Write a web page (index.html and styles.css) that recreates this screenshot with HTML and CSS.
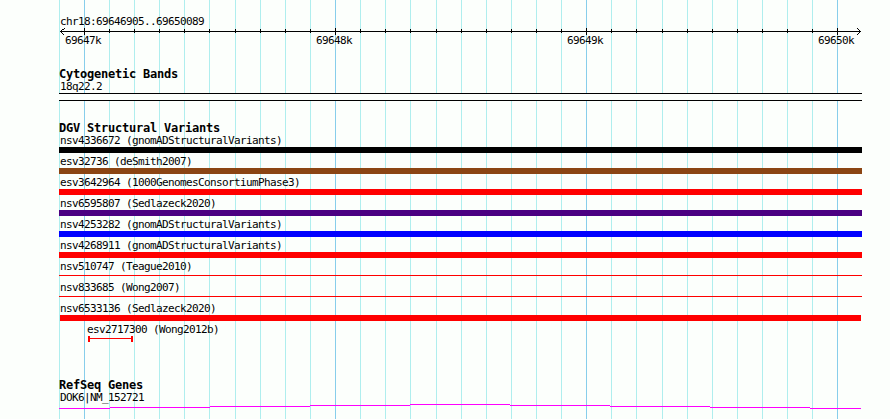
FILE: index.html
```
<!DOCTYPE html>
<html lang="en">
<head>
<meta charset="utf-8">
<title>chr18:69646905..69650089</title>
<link rel="stylesheet" href="styles.css">
</head>
<body>
<svg class="grid" width="890" height="419" aria-hidden="true">
  <path class="minor" d="M59.5 0V419M109.5 0V419M134.5 0V419M159.5 0V419M184.5 0V419M209.5 0V419M235.5 0V419M260.5 0V419M285.5 0V419M310.5 0V419M360.5 0V419M385.5 0V419M410.5 0V419M436.5 0V419M461.5 0V419M486.5 0V419M511.5 0V419M536.5 0V419M561.5 0V419M611.5 0V419M636.5 0V419M662.5 0V419M687.5 0V419M712.5 0V419M737.5 0V419M762.5 0V419M787.5 0V419M812.5 0V419"/>
  <path class="major" d="M84.5 0V419M335.5 0V419M586.5 0V419M837.5 0V419"/>
</svg>
<main class="tracks">
  <section class="ruler">
    <div class="label">chr18:69646905..69650089</div>
    <svg class="axis" width="803" height="20" viewBox="59 28 803 20">
      <path d="M60 31.5H861M64.5 28v1M63.5 29v1M62.5 29v1M61.5 30v1M61.5 32v1M62.5 33v1M63.5 34v1M857.5 28v1M858.5 29v1M859.5 30v1M859.5 32v1M858.5 33v1M857.5 34v1"/>
      <path d="M109.5 29v4M134.5 29v4M159.5 29v4M184.5 29v4M209.5 29v4M235.5 29v4M260.5 29v4M285.5 29v4M310.5 29v4M360.5 29v4M385.5 29v4M410.5 29v4M436.5 29v4M461.5 29v4M486.5 29v4M511.5 29v4M536.5 29v4M561.5 29v4M611.5 29v4M636.5 29v4M662.5 29v4M687.5 29v4M712.5 29v4M737.5 29v4M762.5 29v4M787.5 29v4M812.5 29v4"/>
      <path d="M84.5 28v7M335.5 28v7M586.5 28v7M837.5 28v7"/>
      <text x="65" y="44">69647k</text>
      <text x="316" y="44">69648k</text>
      <text x="567" y="44">69649k</text>
      <text x="818" y="44">69650k</text>
    </svg>
  </section>
  <section class="cyto">
    <h2>Cytogenetic Bands</h2>
    <div class="label">18q22.2</div>
    <div class="band"></div>
  </section>
  <section class="variants">
    <h2>DGV Structural Variants</h2>
    <div class="variant"><div class="label">nsv4336672 (gnomADStructuralVariants)</div><div class="bar black"></div></div>
    <div class="variant"><div class="label">esv32736 (deSmith2007)</div><div class="bar brown"></div></div>
    <div class="variant"><div class="label">esv3642964 (1000GenomesConsortiumPhase3)</div><div class="bar red"></div></div>
    <div class="variant"><div class="label">nsv6595807 (Sedlazeck2020)</div><div class="bar purple"></div></div>
    <div class="variant"><div class="label">nsv4253282 (gnomADStructuralVariants)</div><div class="bar blue"></div></div>
    <div class="variant"><div class="label">nsv4268911 (gnomADStructuralVariants)</div><div class="bar red"></div></div>
    <div class="variant"><div class="label">nsv510747 (Teague2010)</div><div class="bar thin"></div></div>
    <div class="variant"><div class="label">nsv833685 (Wong2007)</div><div class="bar thin"></div></div>
    <div class="variant"><div class="label">nsv6533136 (Sedlazeck2020)</div><div class="bar red inset"></div></div>
    <div class="variant short"><div class="label">esv2717300 (Wong2012b)</div><div class="range"></div></div>
  </section>
  <section class="genes">
    <h2>RefSeq Genes</h2>
    <div class="label">DOK6|NM_152721</div>
    <svg class="gene" width="803" height="15" viewBox="59 404 803 15">
      <path d="M59 408.5H110M110 407.5H210M210 406.5H310M310 405.5H410M410 404.5H510M510 405.5H610M610 406.5H710M710 407.5H810M810 408.5H861"/>
    </svg>
  </section>
</main>
</body>
</html>
```

FILE: styles.css
```
body {
  margin: 0;
  background: #fcfffc;
  color: #000;
  font-family: "DejaVu Sans Mono", "Liberation Mono", monospace;
  overflow: hidden;
}

svg {
  display: block;
  shape-rendering: crispEdges;
}

.grid {
  position: absolute;
  top: 0;
  left: 0;
  fill: none;
}

.minor { stroke: #afeeee; }
.major { stroke: #87ceeb; }

.tracks {
  position: relative;
  width: 803px;
  padding: 15px 0 0 59px;
}

.label,
.axis text {
  font-size: 11px;
  letter-spacing: -0.622px;
}

.label {
  height: 13px;
  padding-left: 1px;
  line-height: 13px;
  white-space: pre;
}

h2 {
  height: 13px;
  margin: 0;
  font-size: 12px;
  font-weight: bold;
  line-height: 14px;
  letter-spacing: -0.224px;
  white-space: pre;
}

.axis path { stroke: #000; fill: none; }
.axis text { fill: #000; }

.cyto { margin-top: 19px; }

.band {
  box-sizing: border-box;
  height: 8px;
  border: solid #000;
  border-width: 1px 0;
  background: #fcfffc;
}

.variants { margin-top: 20px; }
.variant { height: 21px; }

.bar { height: 6px; }
.black { background: #000; }
.brown { background: #8b4513; }
.red { background: #f00; }
.purple { background: #4b0082; }
.blue { background: #00f; }

.thin {
  height: 1px;
  margin-top: 2px;
  background: #f00;
}

.inset { margin: 0 1px; }

.short { padding-left: 27px; }

.range {
  display: flex;
  box-sizing: border-box;
  width: 45px;
  height: 6px;
  margin-left: 2px;
  border: solid #f00;
  border-width: 0 2px;
}

.range::before {
  content: "";
  flex: 1;
  height: 1px;
  margin-top: 2px;
  background: #f00;
}

.genes { margin-top: 34px; }
.gene path { stroke: #f0f; fill: none; }
```
